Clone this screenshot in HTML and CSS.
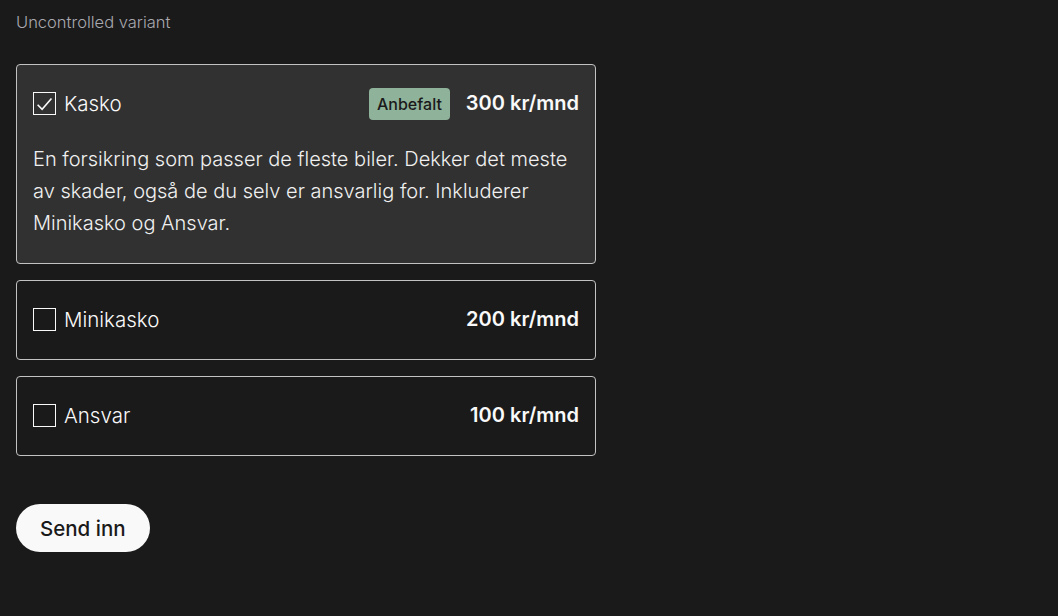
FILE: index.html
```html
<!DOCTYPE html>
<html lang="no">
<head>
<meta charset="utf-8">
<link rel="stylesheet" href="styles.css">
</head>
<body>
<main class="page">
  <p class="caption">Uncontrolled variant</p>
  <div class="list">
    <label class="card checked">
      <div class="row">
        <span class="box"><svg viewBox="0 0 22 22" width="21" height="21"><path d="M3.8 12.3 L8.5 17 L18.3 5.8" fill="none" stroke="#f9f9f9" stroke-width="1.7"/></svg></span>
        <span class="name">Kasko</span>
        <span class="badge">Anbefalt</span>
        <span class="price">300 kr/mnd</span>
      </div>
      <p class="desc">En forsikring som passer de fleste biler. Dekker det meste av skader, også de du selv er ansvarlig for. Inkluderer Minikasko og Ansvar.</p>
    </label>
    <label class="card">
      <div class="row">
        <span class="box"></span>
        <span class="name">Minikasko</span>
        <span class="price">200 kr/mnd</span>
      </div>
    </label>
    <label class="card">
      <div class="row">
        <span class="box"></span>
        <span class="name">Ansvar</span>
        <span class="price">100 kr/mnd</span>
      </div>
    </label>
  </div>
  <button class="submit">Send inn</button>
</main>
</body>
</html>
```
FILE: styles.css
```css
* { box-sizing: border-box; }
html, body { margin: 0; background: #1b1a1a; }
body { font-family: Inter, "Noto Sans", sans-serif; color: #f9f9f9; }
.page { padding: 12px 16px; width: 612px; }
.caption { margin: 0 0 32px; font-size: 16.5px; line-height: 20px; font-weight: 300; color: #a9a9b0; }
.list { display: flex; flex-direction: column; gap: 16px; }
.card { display: block; border: 1px solid #c2c2c2; border-radius: 4px; padding: 23px 16px; }
.card.checked { background: #313131; }
.row { display: flex; align-items: center; height: 32px; }
.box { width: 23px; height: 23px; border: 1px solid #f9f9f9; display: flex; align-items: center; justify-content: center; margin-right: 8px; margin-top: -1px; }
.box svg { display: block; }
.name { font-size: 20.5px; font-weight: 300; flex: 1; margin-top: -2px; }
.badge { background: #8fb39a; color: #1b1a1a; font-size: 16px; font-weight: 500; border-radius: 4px; height: 32px; line-height: 32px; padding: 0 8px; margin-right: 16px; }
.price { font-size: 20px; font-weight: 600; margin-top: -2px; }
.desc { margin: 23px 0 0; padding-bottom: 1px; font-size: 20px; line-height: 32px; font-weight: 300; color: #f0f0f0; }
.submit { margin-top: 48px; height: 48px; padding: 0 24px; border: none; border-radius: 24px; background: #f9f9f9; color: #1b1a1a; font-family: Inter, sans-serif; font-size: 20.5px; font-weight: 500; }
```
